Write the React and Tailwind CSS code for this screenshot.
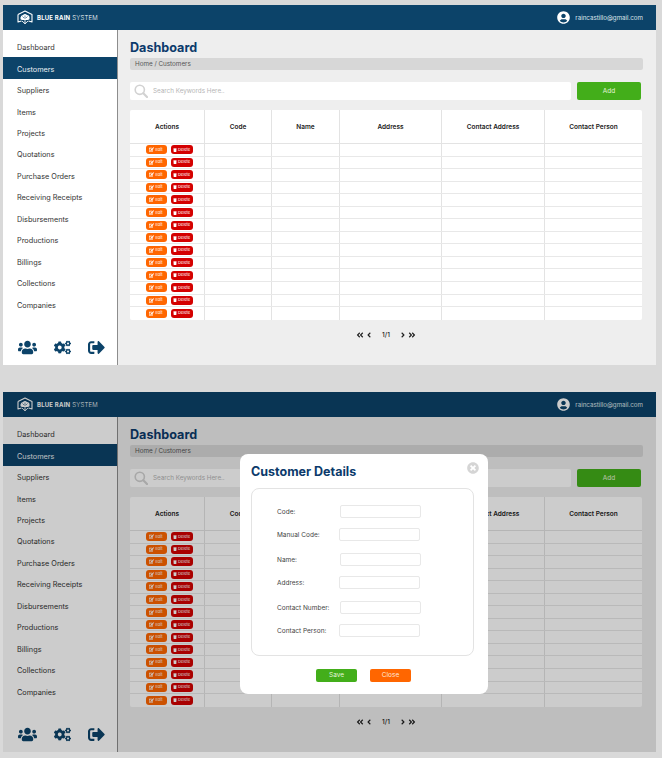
import React from 'react';
import { FaUsers, FaCogs, FaSignOutAlt, FaUserCircle, FaAngleDoubleLeft, FaAngleDoubleRight, FaAngleLeft, FaAngleRight, FaEdit, FaTrash, FaTimesCircle } from 'react-icons/fa';

const navItems = ['Dashboard', 'Customers', 'Suppliers', 'Items', 'Projects', 'Quotations', 'Purchase Orders', 'Receiving Receipts', 'Disbursements', 'Productions', 'Billings', 'Collections', 'Companies'];

const columns = [
    { title: 'Actions', width: 'w-[75px]' },
    { title: 'Code', width: 'w-[67px]' },
    { title: 'Name', width: 'w-[68px]' },
    { title: 'Address', width: 'w-[102px]' },
    { title: 'Contact Address', width: 'w-[103px]' },
    { title: 'Contact Person', width: 'flex-1' },
];

const fields = [
    { label: 'Code:', gap: 'mt-0', labelWidth: 'w-[88px]' },
    { label: 'Manual Code:', gap: 'mt-[10px]', labelWidth: 'w-[87px]' },
    { label: 'Name:', gap: 'mt-[12px]', labelWidth: 'w-[88px]' },
    { label: 'Address:', gap: 'mt-[10px]', labelWidth: 'w-[87px]' },
    { label: 'Contact Number:', gap: 'mt-[12px]', labelWidth: 'w-[88px]' },
    { label: 'Contact Person:', gap: 'mt-[10px]', labelWidth: 'w-[87px]' },
];

const rows = Array.from({ length: 14 }, (_, i) => i);

const Logo = () => (
    <svg width="16" height="15" viewBox="0 0 16 15" fill="none" stroke="#fff" strokeWidth="1.1" strokeLinejoin="round">
        <path d="M1 4.5 L8 1 L15 4.5 L15 12 L11.5 11 M1 4.5 L1 12 L4.5 11" />
        <path d="M3.5 7.5 Q4 5 6 5 Q8 3 10 5 Q12.5 5 12.5 7.5 Q13 10 10.5 10 L5.5 10 Q3 10 3.5 7.5 Z" fill="#fff" stroke="none" />
        <path d="M5.5 6.5 L7 8 M10.5 6.5 L9 8 M8 5.5 L8 9" stroke="#0c4369" strokeWidth="0.6" />
        <path d="M5 11 L8 13.8 L11 11 M8 10 L8 13.8" strokeWidth="0.9" />
    </svg>
);

const SearchIcon = () => (
    <svg width="14" height="14" viewBox="0 0 14 14" fill="none" stroke="#d2d2d2" className="shrink-0">
        <circle cx="5.8" cy="5.8" r="4.6" strokeWidth="1.6" />
        <path d="M9.3 9.3 L13 13" strokeWidth="2.2" strokeLinecap="round" />
    </svg>
);

const ActionButtons = () => (
    <div className="flex items-center justify-center gap-[4px] pl-[4px]">
        <button className="flex items-center justify-center gap-[1px] w-[21px] h-[9px] bg-[#ff6600] rounded-[3px] text-[4px] text-white">
            <FaEdit className="text-[5px]" />
            Edit
        </button>
        <button className="flex items-center justify-center gap-[1px] w-[22px] h-[9px] bg-[#d40000] rounded-[3px] text-[4px] text-white">
            <FaTrash className="text-[4px]" />
            Delete
        </button>
    </div>
);

const CustomerTable = () => (
    <div className="bg-white rounded-[2px] mt-[10px] mr-[14px] overflow-hidden">
        <div className="flex h-[34px] border-b border-[#e3e3e3]">
            {columns.map((col) => (
                <div key={col.title} className={`${col.width} flex items-center justify-center pt-[3px] border-r border-[#e3e3e3] last:border-r-0 text-[6.5px] font-semibold text-[#222]`}>
                    {col.title}
                </div>
            ))}
        </div>
        {rows.map((row) => (
            <div key={row} className="flex h-[12.55px] border-b border-[#e8e8e8] last:border-b-0">
                {columns.map((col, index) => (
                    <div key={col.title} className={`${col.width} flex items-center justify-center border-r border-[#e3e3e3] last:border-r-0`}>
                        {index === 0 && <ActionButtons />}
                    </div>
                ))}
            </div>
        ))}
    </div>
);

const Screen = ({ children }) => (
    <div className="relative mx-[3px] w-[653px] h-[360px] flex flex-col overflow-hidden">
        {/* Top bar */}
        <header className="h-[25px] shrink-0 bg-[#0c4369] flex items-center justify-between pl-[14px] pr-[13px] text-white">
            <div className="flex items-center gap-[4px]">
                <Logo />
                <span className="text-[6px] tracking-[0.2px]">
                    <span className="font-bold">BLUE RAIN</span> <span className="font-light">SYSTEM</span>
                </span>
            </div>
            <div className="flex items-center gap-[5px]">
                <FaUserCircle className="text-[13px]" />
                <span className="text-[6.2px] text-[#dfe7ec]">raincastillo@gmail.com</span>
            </div>
        </header>

        <div className="flex flex-1 min-h-0">
            {/* Sidebar */}
            <aside className="w-[115px] shrink-0 bg-white border-r border-[#8d8d8d] flex flex-col pt-[6px]">
                {navItems.map((item) => (
                    <div key={item} className={`h-[21.45px] flex items-center pl-[14px] pt-[4px] text-[7.3px] ${item === 'Customers' ? 'bg-[#0c4369] text-[#e8eef2]' : 'text-[#333]'}`}>
                        {item}
                    </div>
                ))}
                <div className="mt-auto flex items-center justify-between pl-[15px] pr-[12px] pb-[8px] text-[#0c4369]">
                    <FaUsers className="text-[19px]" />
                    <FaCogs className="text-[17px]" />
                    <FaSignOutAlt className="text-[17px]" />
                </div>
            </aside>

            {/* Content */}
            <main className="flex-1 bg-[#eeeeee] pl-[12px] pt-[10px]">
                <h1 className="text-[12.6px] leading-[16px] font-bold text-[#0c3a6b]">Dashboard</h1>
                <div className="mt-[2px] mr-[13px] h-[12px] bg-[#d7d7d7] rounded-[2px] flex items-center pl-[5px] pt-[2px] text-[6.3px] text-[#555]">
                    Home / Customers
                </div>
                <div className="mt-[12px] mr-[14px] flex justify-between">
                    <div className="w-[441px] h-[18px] bg-white rounded-[2px] flex items-center pl-[4px] gap-[5px]">
                        <SearchIcon />
                        <span className="text-[6.3px] pt-[1px] text-[#b5b5b5]">Search Keywords Here..</span>
                    </div>
                    <button className="w-[64px] h-[18px] mr-[1px] pt-[1px] bg-[#43ae1a] rounded-[2px] text-[6.5px] text-[#e6f5df]">Add</button>
                </div>
                <CustomerTable />
                <div className="mt-[10px] mr-[14px] flex items-center justify-center text-[#222]">
                    <FaAngleDoubleLeft className="text-[8px]" />
                    <FaAngleLeft className="text-[8px] ml-[1px]" />
                    <span className="text-[6.5px] pt-[1px] font-medium mx-[9px]">1/1</span>
                    <FaAngleRight className="text-[8px]" />
                    <FaAngleDoubleRight className="text-[8px] ml-[1px]" />
                </div>
            </main>
        </div>
        {children}
    </div>
);

const CustomerModal = () => (
    <div className="absolute inset-0 bg-black/20">
        <div className="absolute left-[237px] top-[62px] w-[248px] h-[240px] bg-white rounded-[8px] px-[11px] pt-[10px]">
            <FaTimesCircle className="absolute right-[9px] top-[8px] text-[12px] text-[#d5d5d5]" />
            <h2 className="text-[12.5px] leading-[16px] font-bold text-[#0c3a6b]">Customer Details</h2>
            <div className="mt-[8px] w-[223px] h-[168px] border border-[#e3e3e3] rounded-[8px] pt-[16px]">
                {fields.map((field) => (
                    <div key={field.label} className={`${field.gap} flex items-center h-[13px]`}>
                        <label className={`${field.labelWidth} pl-[25px] pt-[2px] shrink-0 text-[6.5px] text-[#444]`}>{field.label}</label>
                        <div className="w-[81px] h-[13px] bg-white border border-[#e8e8e8] rounded-[2px]"></div>
                    </div>
                ))}
            </div>
            <div className="mt-[13px] pr-[1px] flex justify-center gap-[13px]">
                <button className="w-[41px] h-[13px] pt-[1px] bg-[#43ae1a] rounded-[2px] text-[6.5px] text-[#e6f5df]">Save</button>
                <button className="w-[41px] h-[13px] pt-[1px] bg-[#ff6600] rounded-[2px] text-[6.5px] text-[#ffe9da]">Close</button>
            </div>
        </div>
    </div>
);

const App = () => {
    return (
        <div className="w-[662px] h-[758px] bg-[#d9d9d9] pt-[5px] font-['Inter',sans-serif] overflow-hidden">
            <Screen />
            <div className="mt-[27px]">
                <Screen>
                    <CustomerModal />
                </Screen>
            </div>
        </div>
    );
};

export default App;
